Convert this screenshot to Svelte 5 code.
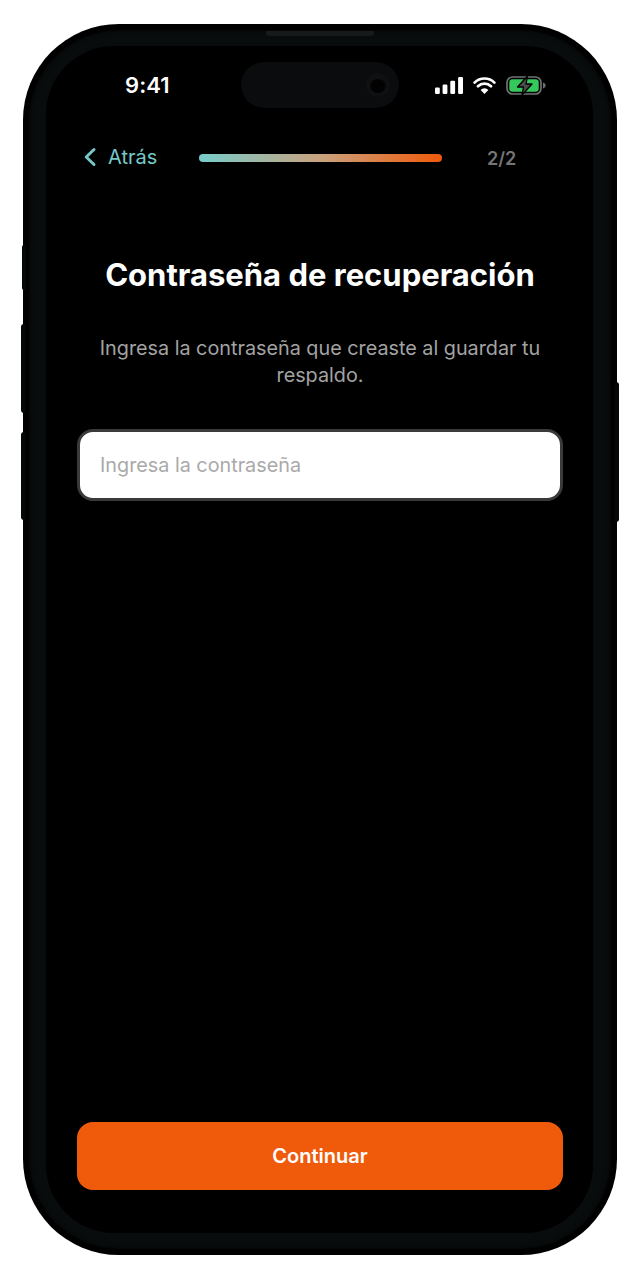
<script lang="ts">
	let password = $state('');
</script>

<div class="page">
	<div class="phone">
		<span class="side mute"></span>
		<span class="side vol-up"></span>
		<span class="side vol-down"></span>
		<span class="side power"></span>
		<div class="bezel">
			<span class="speaker"></span>
			<div class="screen">
				<header class="status">
					<span class="time">9:41</span>
					<div class="island"><span class="camera"></span></div>
					<div class="indicators">
						<svg width="28" height="17" viewBox="0 0 28 17" aria-hidden="true">
							<rect x="0" y="10.500" width="4.800" height="6.500" rx="1.200" fill="#fff" />
							<rect x="7.600" y="7.500" width="4.800" height="9.500" rx="1.200" fill="#fff" />
							<rect x="15.300" y="3.800" width="4.800" height="13.200" rx="1.200" fill="#fff" />
							<rect x="23.100" y="0" width="4.900" height="17" rx="1.200" fill="#fff" />
						</svg>
						<svg width="23" height="17" viewBox="0 0 23 17" aria-hidden="true">
							<path d="M1.600 5.600a14 14 0 0 1 19.800 0M5 9.300a9.200 9.200 0 0 1 13 0" fill="none" stroke="#fff" stroke-width="2.700" stroke-linecap="round" />
							<path d="M11.500 17l-3.900-4.100a5.600 5.600 0 0 1 7.800 0z" fill="#fff" />
						</svg>
						<svg width="40" height="21" viewBox="0 0 40 21" aria-hidden="true">
							<rect x="1" y="2" width="34" height="17" rx="5.500" fill="#000" stroke="#707271" stroke-width="1.700" />
							<rect x="3.300" y="4.300" width="29.400" height="12.400" rx="3.200" fill="#35c95c" />
							<path d="M37 7.500v6c1.600-.4 2.600-1.600 2.600-3S38.600 7.900 37 7.500z" fill="#6d6f6e" />
							<path d="M21.500 1L11.500 12h6l-1.500 8L26 9h-6z" fill="#4a4c4b" stroke="#000" stroke-width="1.300" stroke-linejoin="round" />
						</svg>
					</div>
				</header>

				<nav class="topbar">
					<button type="button" class="back">
						<svg width="14" height="20" viewBox="0 0 14 20" aria-hidden="true">
							<path d="M11 2.500L3.200 10l7.800 7.500" fill="none" stroke="#76c8c8" stroke-width="3" stroke-linecap="round" stroke-linejoin="round" />
						</svg>
						Atrás
					</button>
					<div class="progress"></div>
					<span class="steps">2/2</span>
				</nav>

				<main class="body">
					<h1>Contraseña de recuperación</h1>
					<p>Ingresa la contraseña que creaste al guardar tu respaldo.</p>
					<input type="password" placeholder="Ingresa la contraseña" bind:value={password} />
					<button type="button" class="cta">Continuar</button>
				</main>
			</div>
		</div>
	</div>
</div>

<style>
	:global(body) {
		margin: 0;
		background: #fff;
		font-family: 'Inter', 'Liberation Sans', sans-serif;
	}
	.page {
		width: 640px;
		height: 1280px;
		padding: 24px 23px 25px;
		box-sizing: border-box;
	}
	.phone {
		position: relative;
		height: 100%;
		box-sizing: border-box;
		padding: 6px;
		border-radius: 96px;
		background: #000;
	}
	.side {
		position: absolute;
		background: #060707;
		width: 4px;
	}
	.mute {
		left: -1px;
		top: 221px;
		height: 45px;
		border-radius: 2px 0 0 2px;
	}
	.vol-up {
		left: -2px;
		top: 300px;
		height: 89px;
		border-radius: 3px 0 0 3px;
	}
	.vol-down {
		left: -2px;
		top: 408px;
		height: 88px;
		border-radius: 3px 0 0 3px;
	}
	.power {
		right: -2px;
		top: 358px;
		height: 140px;
		border-radius: 0 3px 3px 0;
	}
	.bezel {
		position: relative;
		height: 100%;
		box-sizing: border-box;
		padding: 16px 18px 16px 17px;
		border-radius: 90px;
		background: #090c0d;
		box-shadow: inset 0 0 5px #000;
	}
	.speaker {
		position: absolute;
		top: 1px;
		left: 237px;
		width: 108px;
		height: 5px;
		border-radius: 0 0 3px 3px;
		background: #17191a;
	}
	.screen {
		display: flex;
		flex-direction: column;
		height: 100%;
		box-sizing: border-box;
		padding: 16px 30px 43px 31px;
		border-radius: 68px;
		background: #000;
		color: #fff;
	}
	.status {
		display: flex;
		align-items: center;
		height: 46px;
	}
	.time {
		flex: none;
		width: 164px;
		padding-left: 48px;
		box-sizing: border-box;
		font-size: 22px;
		font-weight: 600;
		letter-spacing: 0.1px;
	}
	.island {
		position: relative;
		flex: none;
		width: 158px;
		height: 46px;
		margin-right: auto;
		border-radius: 23px;
		background: #0a0c0d;
	}
	.camera {
		position: absolute;
		right: 9px;
		top: 11px;
		width: 24px;
		height: 24px;
		box-sizing: border-box;
		border-radius: 50%;
		border: 4px solid #0e1011;
		background: radial-gradient(circle at 50% 62%, #020202 0 55%, #2a2c2d 100%);
	}
	.indicators {
		display: flex;
		align-items: center;
		gap: 10px;
		padding-right: 17px;
	}
	.topbar {
		display: flex;
		align-items: center;
		height: 30px;
		margin-top: 35px;
		padding-left: 6px;
	}
	.back {
		display: flex;
		align-items: center;
		gap: 11px;
		width: 116px;
		height: 28px;
		margin-top: -2px;
		flex: none;
		padding: 0;
		border: 0;
		background: none;
		font: inherit;
		font-size: 20px;
		color: #76c8c8;
	}
	.progress {
		flex: none;
		width: 243px;
		height: 8px;
		border-radius: 4px;
		background: linear-gradient(90deg, #76cccb 0%, #c9a27e 50%, #f05a0a 100%);
	}
	.steps {
		margin-left: 45px;
		font-size: 18px;
		font-weight: 600;
		color: #757575;
	}
	.body {
		display: flex;
		flex-direction: column;
		flex: 1;
		align-items: center;
	}
	h1 {
		margin: 84px 0 0;
		font-size: 31px;
		line-height: 36px;
		font-weight: 700;
		white-space: nowrap;
	}
	p {
		width: 460px;
		margin: 42px 0 0;
		font-size: 19.800px;
		line-height: 27px;
		text-align: center;
		color: #a3a3a3;
	}
	input {
		width: 100%;
		height: 72px;
		margin-top: 40px;
		padding: 0 20px;
		box-sizing: border-box;
		flex: none;
		border: 3px solid #3a3a3c;
		border-radius: 16px;
		background: #fff;
		font: inherit;
		font-size: 19.800px;
		color: #222;
	}
	input::placeholder {
		color: #a9a9a9;
		opacity: 1;
	}
	.cta {
		width: 100%;
		height: 68px;
		margin-top: auto;
		border: 0;
		border-radius: 16px;
		background: #ef5a0b;
		color: #fff;
		font: inherit;
		font-size: 20px;
		font-weight: 600;
	}
</style>
